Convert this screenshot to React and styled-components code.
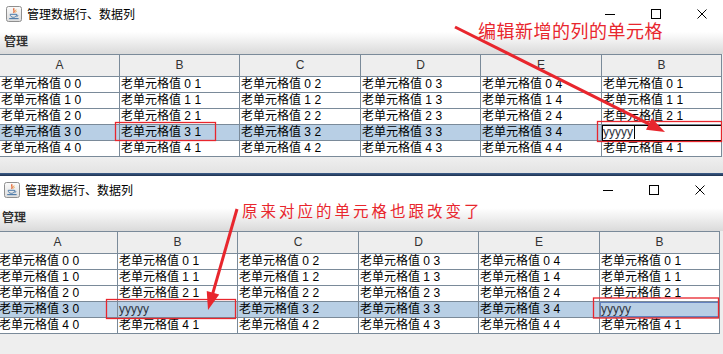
import React from 'react';
import styled, { createGlobalStyle } from 'styled-components';

const UI_FONT = `"Liberation Sans", "Noto Sans CJK SC", sans-serif`;
const CJK_FONT = `"Noto Sans CJK SC", "Liberation Sans", sans-serif`;
const GRID = '#7a8a99';
const RED = '#e8262d';

const GlobalStyle = createGlobalStyle`
  html, body { margin: 0; padding: 0; background: #eeeeee; }
  body { font-family: ${UI_FONT}; }
  * { box-sizing: border-box; }
`;

const Desktop = styled.main`
  position: relative;
  width: 723px;
  height: 354px;
  overflow: hidden;
  background: #eeeeee;
  display: flex;
  flex-direction: column;
`;

const Frame = styled.section`
  width: 725px;
  flex: ${p => (p.$grow ? '1 1 auto' : 'none')};
  height: ${p => (p.$height ? `${p.$height}px` : 'auto')};
  margin-left: ${p => p.$shift}px;
  background: #eeeeee;
  display: flex;
  flex-direction: column;
  overflow: hidden;
`;

const TitleBar = styled.header`
  height: 27px;
  flex: none;
  background: #ffffff;
  display: flex;
  align-items: center;
  padding-left: 6px;
`;

const IconSlot = styled.span`
  width: 16px;
  height: 16px;
  display: flex;
  margin-right: 5px;
`;

const TitleText = styled.span`
  font: 12px/16px ${CJK_FONT};
  color: #000;
  white-space: nowrap;
`;

const Controls = styled.div`
  margin-left: auto;
  height: 100%;
  display: flex;
`;

const CtrlButton = styled.span`
  width: 46px;
  height: 100%;
  display: flex;
  align-items: center;
  justify-content: center;
`;

const MenuBar = styled.nav`
  height: ${p => p.$h}px;
  flex: none;
  display: flex;
  align-items: center;
  padding-left: 4px;
  background: linear-gradient(#ffffff 0%, #ffffff 18%, #dadada 100%);
  font: bold 12px/16px ${CJK_FONT};
  color: #333;
`;

const Table = styled.div`
  display: grid;
  grid-template-columns: 120px 120px 121px 120px 121px 120px;
  flex: none;
`;

const HeadCell = styled.div`
  height: 23px;
  border-top: 1px solid ${GRID};
  border-right: 1px solid ${GRID};
  border-bottom: 1px solid ${GRID};
  background: #eeeeee;
  display: flex;
  align-items: center;
  justify-content: center;
  font: 12px/15px ${UI_FONT};
  color: #333;
`;

const Cell = styled.div`
  height: 16px;
  border-right: 1px solid ${p => (p.$editing ? '#000' : GRID)};
  border-bottom: 1px solid ${p => (p.$editing ? '#000' : GRID)};
  background: ${p => (p.$editing ? '#ffffff' : p.$selected ? '#b8cfe5' : '#ffffff')};
  box-shadow: ${p =>
    p.$editing ? 'inset 1px 1px 0 #000' : p.$focused ? 'inset 0 0 0 1px #6382bf' : 'none'};
  padding-left: 1px;
  font: 12px/15px ${UI_FONT};
  color: ${p => (p.$typed ? '#2e3440' : '#000')};
  white-space: nowrap;
  overflow: hidden;
  display: flex;
  align-items: center;
`;

const Caret = styled.span`
  display: inline-block;
  width: 1px;
  height: 13px;
  background: #000;
  margin-left: 1px;
`;

const Footer = styled.div`
  flex: 1 1 auto;
  background: ${p => (p.$shade ? 'linear-gradient(#efefef, #e3e3e3)' : '#eeeeee')};
`;

const BackEdge = styled.div`
  height: 3px;
  flex: none;
  background: linear-gradient(#3d5f8c, #1d304e);
`;

const Note = styled.span`
  position: absolute;
  left: ${p => p.$x}px;
  top: ${p => p.$y}px;
  font: ${p => p.$size}px/1 ${CJK_FONT};
  letter-spacing: ${p => p.$spacing}px;
  color: ${RED};
  white-space: nowrap;
`;

const Overlay = styled.svg`
  position: absolute;
  left: 0;
  top: 0;
  pointer-events: none;
`;

const HEADERS = ['A', 'B', 'C', 'D', 'E', 'B'];
const SOURCE_COL = [0, 1, 2, 3, 4, 1];

function JavaIcon() {
  return (
    <svg width="16" height="16" viewBox="0 0 16 16">
      <defs>
        <linearGradient id="jbg" x1="0" y1="0" x2="0" y2="1">
          <stop offset="0" stopColor="#fbfbfb" />
          <stop offset="1" stopColor="#dcdcdc" />
        </linearGradient>
      </defs>
      <rect x="0.5" y="0.5" width="15" height="15" rx="2" fill="url(#jbg)" stroke="#8f8f8f" />
      <path d="M8.2 2.2c-1.8 1.4 1.2 2.4-.6 4.6" stroke="#e2541b" strokeWidth="1.2" fill="none" />
      <path d="M10 3.6c-1.2.9.9 1.5-.4 2.8" stroke="#e88a1a" strokeWidth="0.9" fill="none" />
      <path d="M4.2 8.3h6.4c0 2-1.4 3-3.2 3s-3.2-1-3.2-3z" fill="none" stroke="#4a79a8" strokeWidth="1" />
      <path d="M10.6 8.8c1.6-.1 1.6 1.8-.2 1.9" stroke="#4a79a8" strokeWidth="0.9" fill="none" />
      <path d="M3.2 12.6h9.4" stroke="#4a79a8" strokeWidth="1.1" />
    </svg>
  );
}

function MinIcon() {
  return (
    <svg width="10" height="10" viewBox="0 0 10 10">
      <path d="M0 5.5h10" stroke="#000" strokeWidth="1" />
    </svg>
  );
}

function MaxIcon() {
  return (
    <svg width="10" height="10" viewBox="0 0 10 10">
      <rect x="0.5" y="0.5" width="9" height="9" fill="none" stroke="#000" strokeWidth="1" />
    </svg>
  );
}

function CloseIcon() {
  return (
    <svg width="10" height="10" viewBox="0 0 10 10">
      <path d="M0.5 0.5l9 9M9.5 0.5l-9 9" stroke="#000" strokeWidth="1" />
    </svg>
  );
}

function renderCell(variant, r, c) {
  const selected = r === 3;
  const key = `${r}-${c}`;
  if (variant === 'editing' && r === 3 && c === 5) {
    return (
      <Cell key={key} $editing $typed>
        yyyyy<Caret />
      </Cell>
    );
  }
  if (variant === 'after' && r === 3 && (c === 1 || c === 5)) {
    return (
      <Cell key={key} $selected $typed $focused={c === 5}>
        yyyyy
      </Cell>
    );
  }
  return (
    <Cell key={key} $selected={selected}>
      老单元格值 {r} {SOURCE_COL[c]}
    </Cell>
  );
}

function TableWindow({ variant, shift, height, grow, menuHeight, shadeFooter }) {
  return (
    <Frame $shift={shift} $height={height} $grow={grow}>
      <TitleBar>
        <IconSlot>
          <JavaIcon />
        </IconSlot>
        <TitleText>管理数据行、数据列</TitleText>
        <Controls>
          <CtrlButton><MinIcon /></CtrlButton>
          <CtrlButton><MaxIcon /></CtrlButton>
          <CtrlButton><CloseIcon /></CtrlButton>
        </Controls>
      </TitleBar>
      <MenuBar $h={menuHeight}>管理</MenuBar>
      <Table>
        {HEADERS.map((h, i) => (
          <HeadCell key={`h${i}`}>{h}</HeadCell>
        ))}
        {[0, 1, 2, 3, 4].map(r => [0, 1, 2, 3, 4, 5].map(c => renderCell(variant, r, c)))}
      </Table>
      <Footer $shade={shadeFooter} />
    </Frame>
  );
}

function arrow(x1, y1, x2, y2, len = 18, half = 6.5) {
  const dx = x2 - x1;
  const dy = y2 - y1;
  const d = Math.hypot(dx, dy);
  const ux = dx / d;
  const uy = dy / d;
  const bx = x2 - ux * len;
  const by = y2 - uy * len;
  const px = -uy * half;
  const py = ux * half;
  return {
    line: { x1, y1, x2: bx + ux * 2, y2: by + uy * 2 },
    head: `${x2},${y2} ${bx + px},${by + py} ${bx - px},${by - py}`,
  };
}

export default function App() {
  const a1 = arrow(455, 27, 665, 132);
  const a2 = arrow(237, 209, 208, 310);
  return (
    <>
      <GlobalStyle />
      <Desktop>
        <TableWindow variant="editing" shift={0} height={173} menuHeight={27} shadeFooter />
        <BackEdge />
        <TableWindow variant="after" shift={-2} grow menuHeight={28} />

        <Note $x={478} $y={21} $size={18} $spacing={0.5}>编辑新增的列的单元格</Note>
        <Note $x={242} $y={203} $size={15.5} $spacing={3}>原来对应的单元格也跟改变了</Note>

        <Overlay width="723" height="354" viewBox="0 0 723 354">
          <rect x="115.5" y="122.5" width="100" height="18" fill="none" stroke={RED} strokeWidth="1.3" />
          <rect x="597.5" y="121.5" width="124" height="20" fill="none" stroke={RED} strokeWidth="1.3" />
          <rect x="106.5" y="299.5" width="129" height="19" fill="none" stroke={RED} strokeWidth="1.3" />
          <rect x="593.5" y="298" width="125" height="20" fill="none" stroke={RED} strokeWidth="1.3" />
          <line {...a1.line} stroke={RED} strokeWidth="3" />
          <polygon points={a1.head} fill={RED} />
          <line {...a2.line} stroke={RED} strokeWidth="3" />
          <polygon points={a2.head} fill={RED} />
        </Overlay>
      </Desktop>
    </>
  );
}
